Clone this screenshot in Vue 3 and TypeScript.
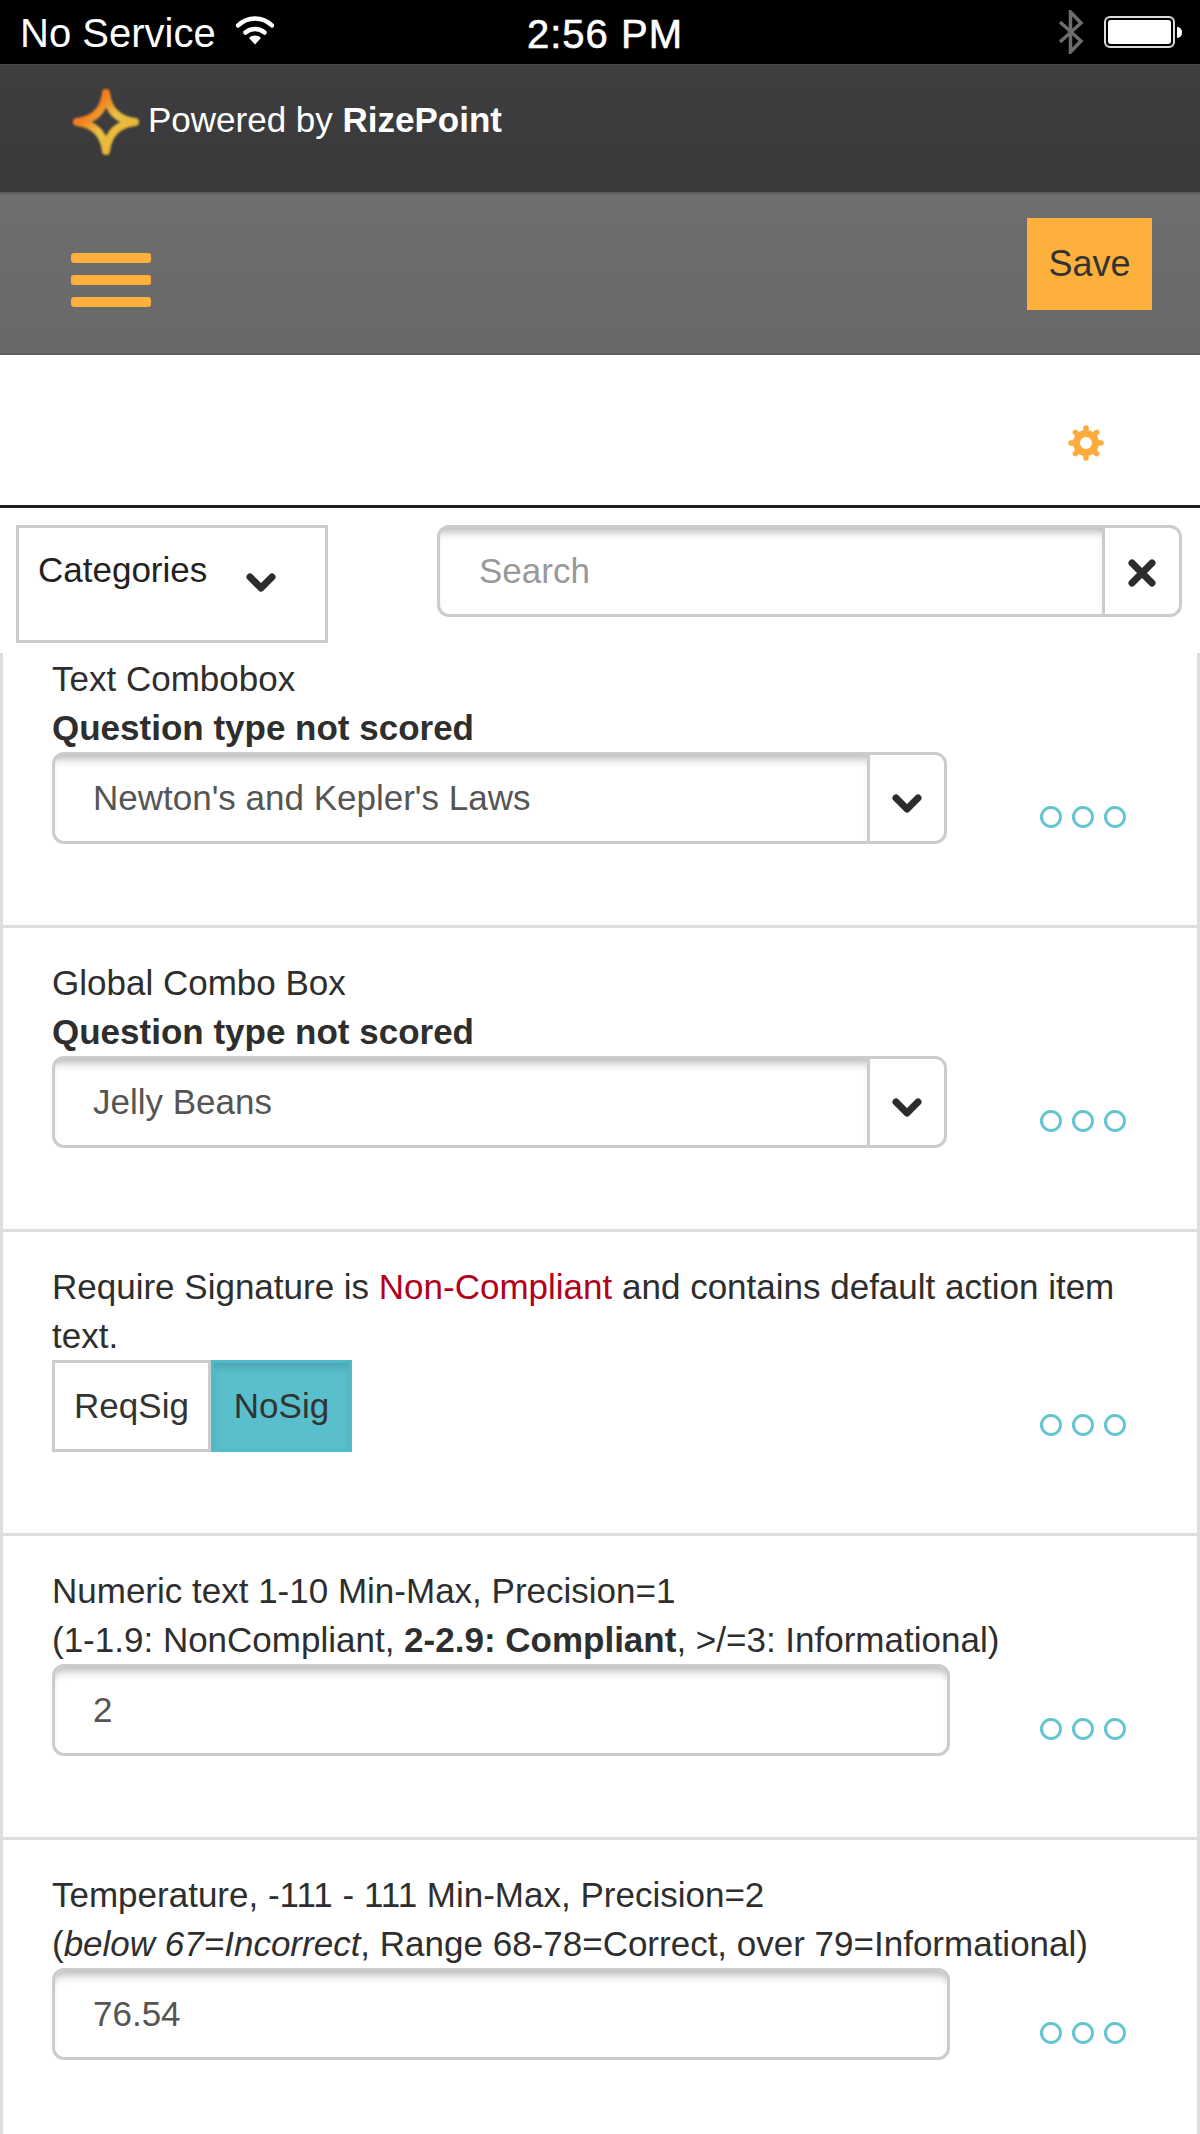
<template>
  <div class="page">
    <div class="status">
      <div class="status-left">
        <span>No Service</span>
        <svg class="wifi" width="38" height="30" viewBox="0 0 38 30">
          <path d="M2 10.5C11.5 1 26.500 1 36 10.5" fill="none" stroke="#fff" stroke-width="4.500" stroke-linecap="round" />
          <path d="M9.500 17.500C14.800 12.800 23.200 12.800 28.500 17.500" fill="none" stroke="#fff" stroke-width="4.500" stroke-linecap="round" />
          <path d="M13 23L19 29.500L25 23C21.500 19.800 16.500 19.800 13 23Z" fill="#fff" />
        </svg>
      </div>
      <span class="clock">2:56 PM</span>
      <div class="status-right">
        <svg width="26" height="44" viewBox="0 0 26 44">
          <path d="M2 12L23 31L12.500 42V2L23 13L2 32" fill="none" stroke="#6d6d6d" stroke-width="3.500" />
        </svg>
        <div class="battery"><i /></div>
        <div class="nub" />
      </div>
    </div>

    <div class="powered">
      <svg class="logo" width="66" height="66" viewBox="0 0 66 66">
        <defs>
          <linearGradient id="logoGrad" x1="0" y1="0" x2="1" y2="1">
            <stop offset="0.28" stop-color="#f47f20" />
            <stop offset="0.52" stop-color="#e9c243" />
            <stop offset="1" stop-color="#eba92c" />
          </linearGradient>
        </defs>
        <path
          d="M33 4Q36 30 62 33Q36 36 33 62Q30 36 4 33Q30 30 33 4Z"
          fill="none"
          stroke="url(#logoGrad)"
          stroke-width="8"
          stroke-linejoin="round"
        />
      </svg>
      <span class="powered-text">Powered by <b>RizePoint</b></span>
    </div>

    <div class="toolbar">
      <div class="burger"><i /><i /><i /></div>
      <div class="save">Save</div>
    </div>

    <div class="title-bar">
      <svg width="36" height="36" viewBox="0 0 36 36">
        <circle cx="18" cy="18" r="9.500" fill="none" stroke="#fdab3d" stroke-width="7" />
        <line
          v-for="a in teeth"
          :key="a"
          x1="18"
          y1="3"
          x2="18"
          y2="6"
          stroke="#fdab3d"
          stroke-width="5.500"
          stroke-linecap="round"
          :transform="`rotate(${a} 18 18)`"
        />
      </svg>
    </div>

    <div class="filters">
      <div class="categories">
        <span>Categories</span>
        <svg class="cat-chev" width="32" height="24" viewBox="0 0 32 24">
          <path d="M5 6L16 17L27 6" fill="none" stroke="#2c2c2c" stroke-width="7" stroke-linejoin="round" stroke-linecap="round" />
        </svg>
      </div>
      <div class="group search">
        <div class="group-main placeholder">Search</div>
        <div class="group-btn">
          <svg class="x-icon" width="30" height="30" viewBox="0 0 30 30">
            <path d="M5 5L25 25M25 5L5 25" stroke="#2c2c2c" stroke-width="7" stroke-linecap="round" />
          </svg>
        </div>
      </div>
    </div>

    <div class="list">
      <div class="row first">
        <div class="row-in">
          <div class="body">
            <div class="line">Text Combobox</div>
            <div class="line"><b>Question type not scored</b></div>
            <div class="group combo">
              <div class="group-main">Newton's and Kepler's Laws</div>
              <div class="group-btn">
                <svg class="chev" width="32" height="24" viewBox="0 0 32 24">
                  <path d="M5 6L16 17L27 6" fill="none" stroke="#2c2c2c" stroke-width="7" stroke-linejoin="round" stroke-linecap="round" />
                </svg>
              </div>
            </div>
          </div>
          <div class="dots"><i /><i /><i /></div>
        </div>
      </div>

      <div class="row">
        <div class="row-in">
          <div class="body">
            <div class="line">Global Combo Box</div>
            <div class="line"><b>Question type not scored</b></div>
            <div class="group combo">
              <div class="group-main">Jelly Beans</div>
              <div class="group-btn">
                <svg class="chev" width="32" height="24" viewBox="0 0 32 24">
                  <path d="M5 6L16 17L27 6" fill="none" stroke="#2c2c2c" stroke-width="7" stroke-linejoin="round" stroke-linecap="round" />
                </svg>
              </div>
            </div>
          </div>
          <div class="dots"><i /><i /><i /></div>
        </div>
      </div>

      <div class="row">
        <div class="row-in">
          <div class="body">
            <div class="line wrap">Require Signature is <span class="red">Non-Compliant</span> and contains default action item text.</div>
            <div class="toggle">
              <div class="tog off">ReqSig</div>
              <div class="tog on">NoSig</div>
            </div>
          </div>
          <div class="dots"><i /><i /><i /></div>
        </div>
      </div>

      <div class="row">
        <div class="row-in">
          <div class="body">
            <div class="line">Numeric text 1-10 Min-Max, Precision=1</div>
            <div class="line">(1-1.9: NonCompliant, <b>2-2.9: Compliant</b>, &gt;/=3: Informational)</div>
            <div class="field">2</div>
          </div>
          <div class="dots"><i /><i /><i /></div>
        </div>
      </div>

      <div class="row">
        <div class="row-in">
          <div class="body">
            <div class="line">Temperature, -111 - 111 Min-Max, Precision=2</div>
            <div class="line">(<em>below 67=Incorrect</em>, Range 68-78=Correct, over 79=Informational)</div>
            <div class="field">76.54</div>
          </div>
          <div class="dots"><i /><i /><i /></div>
        </div>
      </div>
    </div>
  </div>
</template>

<script setup lang="ts">
const teeth: number[] = [0, 45, 90, 135, 180, 225, 270, 315]
</script>

<style>
html, body { margin: 0; background: #fff; }
</style>

<style scoped>
.page {
  width: 1200px;
  height: 2134px;
  overflow: hidden;
  background: #fff;
  color: #333;
  font-family: "Liberation Sans", Arial, sans-serif;
  font-size: 35px;
}
.status {
  height: 64px;
  background: #000;
  color: #fff;
  display: flex;
  align-items: center;
  justify-content: space-between;
  padding: 0 18px 0 20px;
  box-sizing: border-box;
  position: relative;
  font-size: 40px;
}
.status-left { display: flex; align-items: center; gap: 20px; }
.status-left span { margin-top: 2px; }
.wifi { margin-top: -4px; }
.clock {
  position: absolute;
  left: 527px;
  top: 14px;
  line-height: 40px;
  -webkit-text-stroke: 0.6px #fff;
  letter-spacing: 1px;
}
.status-right { display: flex; align-items: center; }
.status-right svg { margin-right: 20px; }
.battery {
  width: 71px;
  height: 32px;
  box-sizing: border-box;
  border: 2px solid #ddd;
  border-radius: 6px;
  padding: 2px;
}
.battery i { display: block; height: 100%; background: #fff; border-radius: 3px; }
.nub { width: 5px; height: 11px; margin-left: 2px; background: #fff; border-radius: 0 6px 6px 0; }
.powered {
  height: 128px;
  box-sizing: border-box;
  background: linear-gradient(#3e3e40, #39393b);
  border-top: 1px solid #47474a;
  display: flex;
  align-items: flex-start;
  padding: 24px 0 0 73px;
  color: #fff;
}
.logo { flex: none; filter: blur(0.8px); }
.powered-text { margin: 11px 0 0 9px; font-size: 35px; line-height: 40px; }
.toolbar {
  height: 163px;
  box-sizing: border-box;
  background: linear-gradient(#6e6e6e, #686868);
  border-top: 2px solid #5c5c5c;
  border-bottom: 2px solid #5c5c5c;
  display: flex;
  justify-content: space-between;
  align-items: flex-start;
  padding: 24px 48px 0 71px;
}
.burger { display: flex; flex-direction: column; gap: 12px; margin-top: 35px; }
.burger i { display: block; width: 80px; height: 10px; background: #fdb03c; border-radius: 3px; }
.save {
  width: 125px;
  height: 92px;
  background: #fdb03c;
  color: #333;
  display: flex;
  align-items: center;
  justify-content: center;
  font-size: 36px;
}
.title-bar {
  height: 150px;
  box-sizing: border-box;
  display: flex;
  justify-content: flex-end;
  align-items: center;
  padding: 26px 96px 0 0;
}
.filters {
  height: 148px;
  box-sizing: border-box;
  border-top: 3px solid #1e1e1e;
  display: flex;
  align-items: flex-start;
  padding: 17px 0 0 16px;
}
.categories {
  width: 312px;
  height: 118px;
  box-sizing: border-box;
  border: 3px solid #ccc;
  padding: 22px 0 0 19px;
  line-height: 40px;
  position: relative;
  color: #222;
}
.cat-chev { position: absolute; left: 226px; top: 43px; }
.group {
  display: flex;
  border: 3px solid #ccc;
  border-radius: 12px;
  overflow: hidden;
  box-sizing: border-box;
  color: #555;
}
.group-main {
  flex: 1;
  display: flex;
  align-items: center;
  padding-left: 38px;
  box-shadow: inset 0 9px 8px -5px rgba(0, 0, 0, 0.28);
}
.group-btn {
  width: 74px;
  flex: none;
  border-left: 3px solid #ccc;
  display: flex;
  align-items: center;
  justify-content: center;
}
.search { width: 745px; height: 92px; margin-left: 109px; }
.search .group-main { padding-left: 39px; }
.x-icon { margin-top: 4px; }
.placeholder { color: #999; }
.list {
  height: 1481px;
  border-left: 3px solid #ddd;
  border-right: 3px solid #ddd;
  overflow: hidden;
}
.row {
  height: 304px;
  box-sizing: border-box;
  border-bottom: 3px solid #ddd;
  padding: 30px 0 0 49px;
}
.first { margin-top: -29px; }
.row-in { display: flex; align-items: flex-end; }
.body { width: 898px; flex: none; }
.line { line-height: 49px; white-space: nowrap; color: #2e2e2e; }
.wrap { white-space: normal; width: 1090px; }
.red { color: #b3001b; }
.combo { width: 895px; height: 92px; }
.chev { margin-top: 12px; }
.field {
  height: 92px;
  box-sizing: border-box;
  border: 3px solid #ccc;
  border-radius: 12px;
  display: flex;
  align-items: center;
  padding-left: 38px;
  color: #555;
  box-shadow: inset 0 9px 8px -5px rgba(0, 0, 0, 0.28);
}
.dots { display: flex; gap: 10px; margin: 0 0 16px 90px; }
.dots i {
  display: block;
  width: 22px;
  height: 22px;
  box-sizing: border-box;
  border: 3px solid #64c5d1;
  border-radius: 50%;
}
.toggle { display: flex; height: 92px; }
.tog { display: flex; align-items: center; justify-content: center; box-sizing: border-box; border: 3px solid #ccc; }
.off { width: 159px; color: #333; }
.on {
  width: 141px;
  background: #5abfcd;
  border-color: #50bac8;
  color: #333;
  box-shadow: inset 0 6px 10px -2px rgba(0, 0, 0, 0.15);
}
</style>
